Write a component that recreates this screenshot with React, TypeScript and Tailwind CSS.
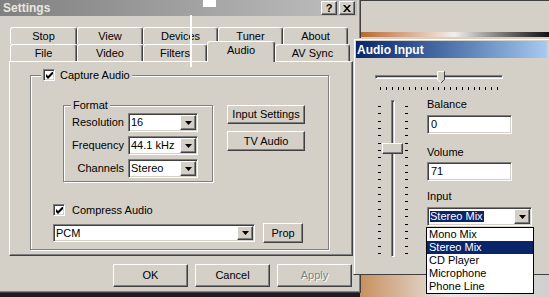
import React from "react";

const raised =
  "border border-t-white border-l-white border-r-[#404040] border-b-[#404040] shadow-[inset_-1px_-1px_0_#808080]";
const sunken =
  "border border-t-[#808080] border-l-[#808080] border-r-white border-b-white shadow-[inset_1px_1px_0_#404040,inset_-1px_-1px_0_#d4d0c8]";
const etched = "border border-[#808080] shadow-[inset_1px_1px_0_white,1px_1px_0_white]";

function Arrow() {
  return (
    <svg width="7" height="4" viewBox="0 0 7 4">
      <path d="M0 0h7L3.5 4z" fill="#000" />
    </svg>
  );
}

function Combo({ className, value, highlight }: { className: string; value: string; highlight?: boolean }) {
  return (
    <div className={`flex bg-white p-[1px] ${sunken} ${className}`}>
      <div className="flex-1 flex items-center pl-[1px] overflow-hidden whitespace-nowrap">
        {highlight ? <span className="bg-[#0a246a] text-white pr-[1px]">{value}</span> : <span>{value}</span>}
      </div>
      <div className={`w-[16px] bg-[#d4d0c8] flex items-center justify-center ${raised}`}>
        <Arrow />
      </div>
    </div>
  );
}

function Check() {
  return (
    <div className={`w-[12px] h-[12px] bg-white flex items-center justify-center ${sunken}`}>
      <svg width="7" height="7" viewBox="0 0 7 7">
        <path d="M0 2L2 4L7 -1V2L2 7L0 5Z" fill="#000" />
      </svg>
    </div>
  );
}

function Button({ className, children, disabled }: { className: string; children: React.ReactNode; disabled?: boolean }) {
  return (
    <div
      className={`bg-[#d4d0c8] flex items-center justify-center ${raised} ${className} ${
        disabled ? "text-[#808080] [text-shadow:1px_1px_0_white]" : ""
      }`}
    >
      {children}
    </div>
  );
}

const tab =
  "h-[17px] flex items-center justify-center border-t border-l border-r border-t-white border-l-white border-r-[#404040] rounded-t-[3px] shadow-[inset_-1px_0_0_#808080]";

function Ticks({ vertical }: { vertical?: boolean }) {
  const items = Array.from({ length: 21 });
  return (
    <>
      {items.map((_, i) => (
        <div key={i} className={vertical ? "w-[3px] h-[1px] bg-black" : "w-[1px] h-[3px] bg-black"} />
      ))}
    </>
  );
}

export default function App() {
  return (
    <div className="relative w-[549px] h-[297px] overflow-hidden bg-[#d4d0c8] font-['Liberation_Sans',Arial,sans-serif] text-[11px] text-black leading-none">
      {/* background window strips */}
      <div className="absolute left-[355px] top-0 w-[194px] h-[1px] bg-[#404040]" />
      <div className="absolute left-[360px] top-[32px] w-[189px] h-[5px] bg-linear-to-r from-[#b8682a] via-[#f4efe8] to-[#141414]" />
      <div className="absolute left-[353px] top-[275px] w-[196px] h-[22px] bg-linear-to-r from-[#c58a52] via-[#e6e6e6] to-[#cfcfcf]" />
      <div className="absolute left-0 top-[293px] w-[360px] h-[4px] bg-[#1c1c26]" />

      {/* Settings window */}
      <div className="absolute left-0 top-0 w-[361px] h-[293px] bg-[#d4d0c8] border-r border-b border-[#404040] shadow-[inset_-1px_-1px_0_#808080] flex flex-col">
        <div className="h-[16px] w-[357px] flex items-center bg-linear-to-r from-[#808080] to-[#c0c0c0] pl-[3px] pr-[2px]">
          <span className="flex-1 font-bold text-[12px] text-[#e8e6e0]">Settings</span>
          <div className="flex gap-[2px]">
            <div className={`w-[16px] h-[14px] bg-[#d4d0c8] flex items-center justify-center font-bold text-[11px] ${raised}`}>?</div>
            <div className={`w-[16px] h-[14px] bg-[#d4d0c8] flex items-center justify-center ${raised}`}>
              <svg width="8" height="7" viewBox="0 0 8 7">
                <path d="M0 0h2l2 2.2L6 0h2L5 3.5 8 7H6L4 4.8 2 7H0l3-3.5z" fill="#000" />
              </svg>
            </div>
          </div>
        </div>

        <div className="flex flex-col pl-[9px] pt-[11px]">
          {/* tabs */}
          <div className="flex ml-[1px]">
            <div className={`${tab} w-[67px]`}>Stop</div>
            <div className={`${tab} w-[66px]`}>View</div>
            <div className={`${tab} w-[75px]`}>Devices</div>
            <div className={`${tab} w-[65px]`}>Tuner</div>
            <div className={`${tab} w-[65px]`}>About</div>
          </div>
          <div className="flex ml-[1px] h-[17px] items-start">
            <div className={`${tab} w-[67px]`}>File</div>
            <div className={`${tab} w-[66px]`}>Video</div>
            <div className={`${tab} w-[64px]`}>Filters</div>
            <div className={`${tab} w-[68px] h-[21px] -mt-[3px] pb-[3px] relative z-10 bg-[#d4d0c8]`}>Audio</div>
            <div className={`${tab} w-[75px]`}>AV Sync</div>
          </div>

          {/* panel */}
          <div className="w-[344px] h-[195px] border border-t-white border-l-white border-r-[#404040] border-b-[#404040] shadow-[inset_-1px_-1px_0_#808080] pl-[20px] pt-[13px]">
            <div className={`w-[299px] h-[175px] flex flex-col ${etched}`}>
              <div className="-mt-[8px] ml-[10px] self-start bg-[#d4d0c8] px-[2px] h-[14px] flex items-center gap-[5px]">
                <Check />
                <span>Capture Audio</span>
              </div>
              <div className="flex mt-[23px] ml-[32px] gap-[14px]">
                <div className={`w-[150px] h-[77px] flex flex-col ${etched}`}>
                  <div className="-mt-[7px] ml-[7px] self-start bg-[#d4d0c8] px-[2px] h-[13px] flex items-center">Format</div>
                  <div className="flex flex-col gap-[4px] mt-[1px]">
                    <div className="flex items-center">
                      <span className="w-[60px] text-right">Resolution</span>
                      <Combo className="ml-[4px] w-[70px] h-[19px]" value="16" />
                    </div>
                    <div className="flex items-center">
                      <span className="w-[60px] text-right">Frequency</span>
                      <Combo className="ml-[4px] w-[70px] h-[19px]" value="44.1 kHz" />
                    </div>
                    <div className="flex items-center">
                      <span className="w-[60px] text-right">Channels</span>
                      <Combo className="ml-[4px] w-[70px] h-[19px]" value="Stereo" />
                    </div>
                  </div>
                </div>
                <div className="flex flex-col gap-[7px]">
                  <Button className="w-[78px] h-[19px]">Input Settings</Button>
                  <Button className="w-[78px] h-[20px]">TV Audio</Button>
                </div>
              </div>
              <div className="mt-[21px] ml-[22px] h-[14px] flex items-center gap-[7px]">
                <Check />
                <span>Compress Audio</span>
              </div>
              <div className="mt-[6px] ml-[22px] flex items-center gap-[8px]">
                <Combo className="w-[202px] h-[18px]" value="PCM" />
                <Button className="w-[40px] h-[20px]">Prop</Button>
              </div>
            </div>
          </div>

          {/* dialog buttons */}
          <div className="flex gap-[7px] mt-[8px] ml-[104px]">
            <Button className="w-[75px] h-[23px]">OK</Button>
            <Button className="w-[75px] h-[23px]">Cancel</Button>
            <Button className="w-[75px] h-[23px]" disabled>
              Apply
            </Button>
          </div>
        </div>
      </div>

      {/* Audio Input window */}
      <div className="absolute left-[353px] top-[38px] w-[196px] h-[237px] bg-[#d4d0c8] border-t border-l border-b border-t-[#d4d0c8] border-l-[#d4d0c8] border-b-[#404040] shadow-[inset_1px_1px_0_white] p-[2px] flex flex-col">
        <div className="h-[17px] flex items-center pl-[1px] bg-linear-to-r from-[#0a246a] to-[#a6caf0] text-white font-bold text-[12px]">
          Audio Input
        </div>
        {/* horizontal slider */}
        <div className="mt-[13px] ml-[19px] w-[128px] flex flex-col">
          <div className="relative h-[12px]">
            <div className="mt-[4px] h-[4px] border border-t-[#808080] border-l-[#808080] border-r-white border-b-white bg-[#d4d0c8] shadow-[inset_1px_1px_0_#404040]" />
            <svg className="absolute left-[62px] top-[0px]" width="8" height="12" viewBox="0 0 8 12">
              <path d="M0.5 0.5H7.5V8.5L4 11.5L0.5 8.5Z" fill="#d4d0c8" />
              <path d="M0.5 8.5V0.5H7" stroke="#fff" fill="none" />
              <path d="M7.5 0.5V8.5L4 12" stroke="#404040" fill="none" />
              <path d="M0.5 8.5L4 11.5" stroke="#fff" fill="none" />
            </svg>
          </div>
          <div className="mt-[4px] h-[3px] px-[5px] flex justify-between">
            <Ticks />
          </div>
        </div>
        {/* main row */}
        <div className="flex mt-[7px]">
          <div className="ml-[22px] relative flex w-[30px] h-[160px]">
            <div className="w-[3px] flex flex-col justify-between pt-[9px] pb-[3px]">
              <Ticks vertical />
            </div>
            <div className="ml-[10px] mt-[3px] w-[4px] h-[157px] border border-t-[#808080] border-l-[#808080] border-r-white border-b-white shadow-[inset_1px_1px_0_#404040]" />
            <div className="ml-[10px] w-[3px] flex flex-col justify-between pt-[9px] pb-[3px]">
              <Ticks vertical />
            </div>
            <div className={`absolute left-[4px] top-[46px] w-[21px] h-[11px] bg-[#d4d0c8] ${raised}`} />
          </div>
          <div className="ml-[19px] flex flex-col">
            <div className="h-[14px] flex items-center">Balance</div>
            <div className={`mt-[4px] w-[85px] h-[19px] bg-white flex items-center pl-[3px] ${sunken}`}>0</div>
            <div className="mt-[11px] h-[14px] flex items-center">Volume</div>
            <div className={`mt-[3px] w-[85px] h-[19px] bg-white flex items-center pl-[3px] ${sunken}`}>71</div>
            <div className="mt-[8px] h-[14px] flex items-center">Input</div>
            <Combo className="mt-[4px] w-[105px] h-[19px]" value="Stereo Mix" highlight />
          </div>
        </div>
      </div>

      {/* dropdown list */}
      <div className="absolute left-[426px] top-[227px] w-[108px] border border-black bg-white flex flex-col">
        <div className="h-[13px] flex items-center pl-[2px]">Mono Mix</div>
        <div className="h-[13px] flex items-center pl-[2px] bg-[#0a246a] text-white">Stereo Mix</div>
        <div className="h-[13px] flex items-center pl-[2px]">CD Player</div>
        <div className="h-[13px] flex items-center pl-[2px]">Microphone</div>
        <div className="h-[13px] flex items-center pl-[2px]">Phone Line</div>
      </div>

      {/* cursor artifacts */}
      <div className="absolute left-[203px] top-0 w-[13px] h-[7px] bg-white" />
      <div className="absolute left-[190px] top-[15px] w-[2px] h-[52px] bg-white" />
    </div>
  );
}
